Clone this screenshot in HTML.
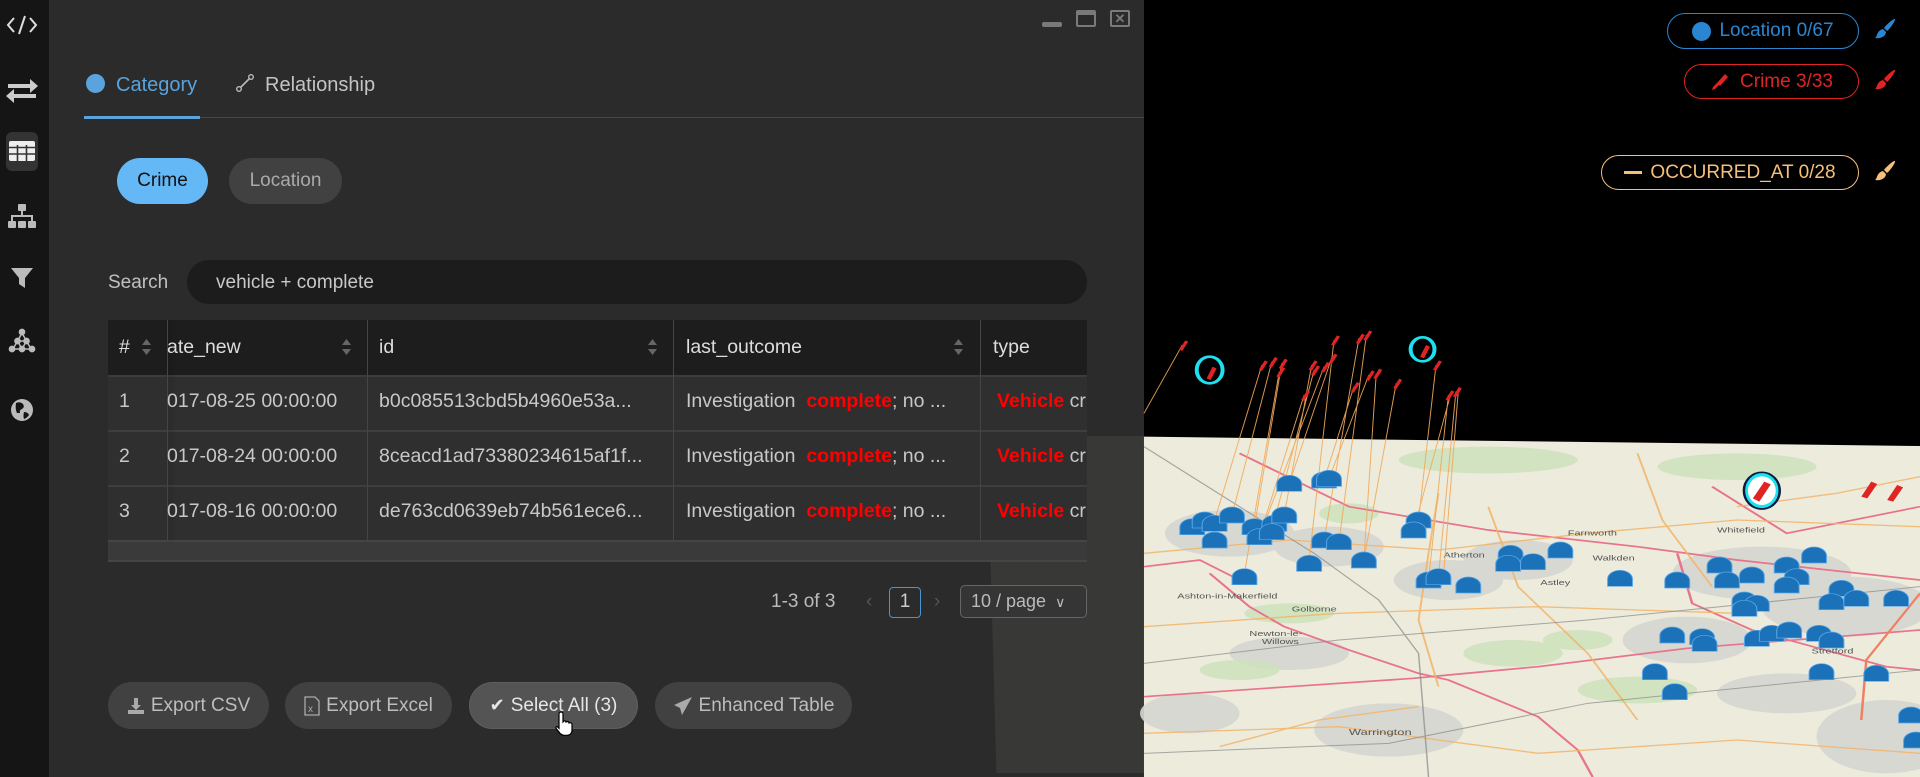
<!DOCTYPE html>
<html><head><meta charset="utf-8">
<style>
*{box-sizing:border-box;margin:0;padding:0}
html,body{width:1920px;height:777px;overflow:hidden}
body{background:#000;font-family:"Liberation Sans",sans-serif;position:relative}
svg{overflow:hidden}
.abs{position:absolute}
#side{left:0;top:0;width:49px;height:777px;background:#151515}
#panel{left:49px;top:0;width:1095px;height:777px;background:#2b2b2b}
.t{position:absolute;white-space:nowrap;line-height:1}
.pill{position:absolute;border-radius:30px;display:flex;align-items:center;justify-content:center;font-size:19px;white-space:nowrap}
.btn{position:absolute;top:682px;height:47px;border-radius:24px;background:#414141;color:#bdbdbd;font-size:19px;display:flex;align-items:center;justify-content:center;gap:6px;white-space:nowrap}
.cell{position:absolute;font-size:19.5px;color:#c8c8c8;white-space:nowrap;overflow:hidden;line-height:1}
.red{color:#f00;font-weight:bold}
</style></head><body>

<div id="side" class="abs">
 <svg width="49" height="777" style="position:absolute;left:0;top:0">
  <g fill="none" stroke="#ddd" stroke-width="2">
   <path d="M14 18 L8 25 L14 32 M30 18 L36 25 L30 32 M25 16 L19 34"/>
  </g>
  <g fill="#ccc">
   <path d="M8 84 h22 v-5 l8 7 l-8 7 v-5 h-22z"/>
   <path d="M36 94 h-22 v-5 l-8 7 l8 7 v-5 h22z"/>
  </g>
  <rect x="6" y="132" width="32" height="39" rx="6" fill="#333"/>
  <rect x="9" y="141" width="26" height="20" rx="2" fill="#eee"/>
  <g stroke="#333" stroke-width="1.6"><path d="M9 147.5h26M9 154h26M17.5 145v16M26.5 145v16"/></g>
  <g fill="#bbb">
   <rect x="18" y="204" width="8" height="7" rx="1"/><rect x="8" y="221" width="8" height="7" rx="1"/><rect x="18" y="221" width="8" height="7" rx="1"/><rect x="28" y="221" width="8" height="7" rx="1"/>
   <path d="M21 211h2v5h-2zM11 215h22v2h-22zM11 215h2v6h-2zM31 215h2v6h-2z"/>
   <path d="M11 268h22l-8 10v10l-6-4v-6z"/>
  </g>
  <g fill="#bbb" stroke="#bbb" stroke-width="1.5">
   <path d="M22 333 L13 349 L31 349 Z M17.5 341 L26.5 341 L22 349Z" fill="none"/>
   <circle cx="22" cy="332" r="2.6"/><circle cx="17.5" cy="341" r="2.6"/><circle cx="26.5" cy="341" r="2.6"/><circle cx="12" cy="349" r="2.6"/><circle cx="22" cy="349" r="2.6"/><circle cx="32" cy="349" r="2.6"/>
  </g>
  <circle cx="22" cy="410" r="11" fill="#bbb"/>
  <path d="M16 403 q4 -2 7 1 q2 3 -1 5 q-3 1 -2 4 l-3 0 q-2 -4 -1 -10z M24 412 q4 0 5 3 q-2 3 -5 4 q-1 -3 0 -7z" fill="#151515"/>
 </svg>
</div>

<div id="panel" class="abs"></div>
<!-- map behind panel (faded) -->
<div class="abs" style="left:987px;top:436px;width:157px;height:337px;background:#383836;clip-path:polygon(0 0,100% 0,100% 100%,6% 100%)"></div>

<!-- window controls -->
<div class="abs" style="left:1042px;top:22px;width:20px;height:5px;border-radius:2px;background:#7a7a7a"></div>
<div class="abs" style="left:1076px;top:10px;width:20px;height:17px;border:2px solid #7a7a7a;border-top-width:5px;border-radius:2px"></div>
<div class="abs" style="left:1110px;top:10px;width:20px;height:17px;border:2px solid #7a7a7a;border-radius:2px;color:#7a7a7a;font-size:13px;font-weight:bold;text-align:center;line-height:13px">✕</div>

<!-- tabs -->
<div class="abs" style="left:86px;top:74px;width:19px;height:19px;border-radius:50%;background:#5aa3dc"></div>
<div class="t" style="left:116px;top:75px;font-size:20px;color:#5aa3dc">Category</div>
<svg class="abs" style="left:235px;top:73px" width="20" height="20"><path d="M4 16 L16 4" stroke="#bbb" stroke-width="1.6"/><circle cx="4" cy="16" r="2.3" fill="#2b2b2b" stroke="#bbb" stroke-width="1.4"/><circle cx="16" cy="4" r="2.3" fill="#2b2b2b" stroke="#bbb" stroke-width="1.4"/></svg>
<div class="t" style="left:265px;top:75px;font-size:20px;color:#c4c4c4">Relationship</div>
<div class="abs" style="left:84px;top:117px;width:1060px;height:1px;background:#474747"></div>
<div class="abs" style="left:84px;top:116px;width:116px;height:3px;background:#5aa3dc"></div>

<!-- chips -->
<div class="pill" style="left:117px;top:158px;width:91px;height:46px;background:#64b8f5;color:#111;font-size:19px">Crime</div>
<div class="pill" style="left:229px;top:158px;width:113px;height:46px;background:#414141;color:#aaa;font-size:19px">Location</div>

<!-- search -->
<div class="t" style="left:108px;top:273px;font-size:19px;color:#c0c0c0">Search</div>
<div class="abs" style="left:187px;top:260px;width:900px;height:44px;border-radius:22px;background:#1c1c1c"></div>
<div class="t" style="left:216px;top:273px;font-size:19px;color:#c8c8c8">vehicle + complete</div>

<!-- table -->
<div class="abs" style="left:108px;top:320px;width:979px;height:242px;background:#2f2f2f;overflow:hidden">
 <div class="abs" style="left:0;top:0;width:979px;height:55px;background:#1d1d1d"></div>
 <div class="abs" style="left:0;top:55px;width:979px;height:2px;background:#3c3c3c"></div>
 <div class="abs" style="left:0;top:110px;width:979px;height:2px;background:#3e3e3e"></div>
 <div class="abs" style="left:0;top:165px;width:979px;height:2px;background:#3e3e3e"></div>
 <div class="abs" style="left:0;top:220px;width:979px;height:22px;background:#3a3a3a;border-top:2px solid #454545;border-bottom:2px solid #454545"></div>
 <div class="abs" style="left:59px;top:0;width:1px;height:220px;background:#454545;box-shadow:3px 0 4px rgba(0,0,0,.4)"></div>
 <div class="abs" style="left:259px;top:0;width:1px;height:220px;background:#454545"></div>
 <div class="abs" style="left:565px;top:0;width:1px;height:220px;background:#454545"></div>
 <div class="abs" style="left:872px;top:0;width:1px;height:220px;background:#454545"></div>
</div>
<svg class="abs" style="left:0;top:0" width="1100" height="400">
 <g fill="#666">
  <path d="M142 345h9l-4.5-6z M142 349h9l-4.5 6z"/>
  <path d="M342 345h9l-4.5-6z M342 349h9l-4.5 6z"/>
  <path d="M648 345h9l-4.5-6z M648 349h9l-4.5 6z"/>
  <path d="M954 345h9l-4.5-6z M954 349h9l-4.5 6z"/>
 </g>
</svg>
<div class="cell" style="left:119px;top:338px;color:#ddd">#</div>
<div class="cell" style="left:167px;top:338px;color:#ddd">ate_new</div>
<div class="cell" style="left:379px;top:338px;color:#ddd">id</div>
<div class="cell" style="left:686px;top:338px;color:#ddd">last_outcome</div>
<div class="cell" style="left:993px;top:338px;color:#ddd">type</div>

<div class="cell" style="left:119px;top:392px">1</div>
<div class="cell" style="left:167px;top:392px">017-08-25 00:00:00</div>
<div class="cell" style="left:379px;top:392px">b0c085513cbd5b4960e53a...</div>
<div class="cell" style="left:686px;top:392px">Investigation&nbsp; <span class="red">complete</span>; no ...</div>
<div class="cell" style="left:997px;top:392px;width:90px"><span class="red">Vehicle</span> crime</div>

<div class="cell" style="left:119px;top:447px">2</div>
<div class="cell" style="left:167px;top:447px">017-08-24 00:00:00</div>
<div class="cell" style="left:379px;top:447px">8ceacd1ad73380234615af1f...</div>
<div class="cell" style="left:686px;top:447px">Investigation&nbsp; <span class="red">complete</span>; no ...</div>
<div class="cell" style="left:997px;top:447px;width:90px"><span class="red">Vehicle</span> crime</div>

<div class="cell" style="left:119px;top:502px">3</div>
<div class="cell" style="left:167px;top:502px">017-08-16 00:00:00</div>
<div class="cell" style="left:379px;top:502px">de763cd0639eb74b561ece6...</div>
<div class="cell" style="left:686px;top:502px">Investigation&nbsp; <span class="red">complete</span>; no ...</div>
<div class="cell" style="left:997px;top:502px;width:90px"><span class="red">Vehicle</span> crime</div>

<!-- pagination -->
<div class="t" style="left:771px;top:592px;font-size:19px;color:#bbb">1-3 of 3</div>
<div class="t" style="left:866px;top:592px;font-size:19px;color:#555">‹</div>
<div class="abs" style="left:889px;top:587px;width:32px;height:31px;border:1.5px solid #4d93cf;border-radius:4px;color:#ccc;font-size:19px;text-align:center;line-height:28px">1</div>
<div class="t" style="left:934px;top:592px;font-size:19px;color:#555">›</div>
<div class="abs" style="left:960px;top:585px;width:127px;height:33px;border:1.5px solid #666;border-radius:5px;background:#353535;color:#bbb;font-size:18px;line-height:30px;padding-left:10px;white-space:nowrap">10 / page <span style="font-size:14px;margin-left:4px">∨</span></div>

<!-- buttons -->
<div class="btn" style="left:108px;width:161px"><svg width="18" height="18"><path d="M7 1h4v7h3l-5 5l-5-5h3z" fill="#aaa"/><rect x="1" y="13" width="16" height="4" fill="#aaa"/></svg>Export CSV</div>
<div class="btn" style="left:285px;width:167px"><svg width="16" height="20"><path d="M1 1h10l4 4v14h-14z" fill="none" stroke="#aaa" stroke-width="1.3"/><text x="4" y="16" font-size="10" fill="#aaa" font-family="Liberation Sans">x</text></svg>Export Excel</div>
<div class="btn" style="left:469px;width:169px;background:#545454;color:#e6e6e6;border:1px solid #5e5e5e"><span style="font-size:18px">✔</span>Select All (3)</div>
<div class="btn" style="left:655px;width:197px"><svg width="20" height="20"><path d="M19 1L1 9l6 3l2 7z" fill="#aaa"/></svg>Enhanced Table</div>
<svg class="abs" style="left:555px;top:710px" width="20" height="28"><path d="M6 2c1.5 0 2 1 2 2v8l1-1c1-.5 2 0 2 1l1-.5c1 0 2 .5 2 1.5l1-.3c1 0 2 .6 2 1.6v6c0 3-2 5-5 5h-3c-2 0-3-1-4-2l-4-5c-.6-1 .5-2 1.5-1.5l1.5 1.5V4c0-1 .5-2 2-2z" fill="#fff" stroke="#000" stroke-width="1.2"/></svg>

<!-- right panel pills -->
<div class="pill" style="left:1667px;top:13px;width:192px;height:36px;border:1.5px solid #2a86d1;color:#2a86d1;font-size:19px"><span style="display:inline-block;width:19px;height:19px;border-radius:50%;background:#2a86d1;margin-right:8px"></span>Location 0/67</div>
<div class="pill" style="left:1684px;top:64px;width:175px;height:35px;border:1.5px solid #e02424;color:#e02424;font-size:19px"><svg width="20" height="20" style="margin-right:10px"><path d="M15 2l3 3l-8 9l-3-3z M7 11l2 2l-4 4l-3 1l1-3z" fill="#e02424"/></svg>Crime 3/33</div>
<div class="pill" style="left:1601px;top:155px;width:258px;height:35px;border:1.5px solid #f7c07a;color:#f7c07a;font-size:19px"><span style="display:inline-block;width:18px;height:3px;background:#f7c07a;margin-right:8px"></span>OCCURRED_AT 0/28</div>
<svg class="abs" style="left:1873px;top:18px" width="24" height="24"><path d="M22 1c1 1-5 10-8 12l-3-3c2-3 10-10 11-9z M10 11l3 3c0 4-5 7-11 6c3-2 1-7 8-9z" fill="#2a86d1"/></svg>
<svg class="abs" style="left:1873px;top:69px" width="24" height="24"><path d="M22 1c1 1-5 10-8 12l-3-3c2-3 10-10 11-9z M10 11l3 3c0 4-5 7-11 6c3-2 1-7 8-9z" fill="#e02424"/></svg>
<svg class="abs" style="left:1873px;top:160px" width="24" height="24"><path d="M22 1c1 1-5 10-8 12l-3-3c2-3 10-10 11-9z M10 11l3 3c0 4-5 7-11 6c3-2 1-7 8-9z" fill="#f7c07a"/></svg>

<!-- map -->
<svg class="abs" style="left:1140px;top:320px" width="780" height="457" viewBox="0 0 1568 1371" preserveAspectRatio="none">
 <path d="M8 350 L1568 378 L1568 1371 L8 1371 Z" fill="#ecebdc"/>
 <g fill="#d6d6d2" opacity=".9">
  <ellipse cx="180" cy="640" rx="130" ry="70"/><ellipse cx="380" cy="680" rx="110" ry="60"/>
  <ellipse cx="620" cy="780" rx="110" ry="60"/><ellipse cx="1250" cy="760" rx="180" ry="80"/>
  <ellipse cx="1420" cy="860" rx="170" ry="90"/><ellipse cx="1100" cy="960" rx="130" ry="70"/>
  <ellipse cx="1500" cy="1250" rx="140" ry="110"/><ellipse cx="500" cy="1230" rx="150" ry="80"/>
  <ellipse cx="760" cy="720" rx="110" ry="60"/><ellipse cx="300" cy="1000" rx="120" ry="50"/>
  <ellipse cx="1300" cy="1120" rx="140" ry="60"/><ellipse cx="100" cy="1180" rx="100" ry="60"/>
 </g>
 <g fill="#cde2bb" opacity=".85">
  <ellipse cx="700" cy="420" rx="180" ry="40"/><ellipse cx="880" cy="960" rx="70" ry="30"/>
  <ellipse cx="300" cy="880" rx="90" ry="30"/><ellipse cx="1000" cy="1110" rx="120" ry="40"/>
  <ellipse cx="1200" cy="440" rx="160" ry="40"/><ellipse cx="420" cy="580" rx="60" ry="30"/>
  <ellipse cx="750" cy="1000" rx="100" ry="40"/><ellipse cx="200" cy="1050" rx="80" ry="30"/>
 </g>
 <g fill="none" stroke-width="5">
  <path d="M8 1130 L300 1100 L550 1075 L620 1065 L800 1040 L1100 985 L1400 950 L1568 930" stroke="#e8738a"/>
  <path d="M200 400 L420 560 L700 630 L1000 680 L1200 720 L1568 780" stroke="#e8738a"/>
  <path d="M1150 500 L1300 640 L1568 560" stroke="#e8738a"/>
  <path d="M140 760 L220 860 L290 920 L420 990 L560 1060 L620 1080 L800 1190 L880 1290 L910 1371" stroke="#e8738a"/>
  <path d="M1080 700 L1110 850 L1230 930 L1500 1040 L1568 1050" stroke="#e8738a"/>
  <path d="M8 740 L120 720 L200 780" stroke="#e8738a"/>
  <path d="M1568 820 L1460 1020 L1450 1200" stroke="#f08060"/>
 </g>
 <g fill="none" stroke="#f3b46a" stroke-width="4" opacity=".85">
  <path d="M8 700 L300 660 L600 690 L900 640 L1200 600 L1568 620"/>
  <path d="M8 920 L400 880 L800 860 L1200 880"/>
  <path d="M600 520 L580 700 L560 900 L600 1100"/>
  <path d="M1568 470 L1400 520 L1200 560"/>
  <path d="M8 1240 L400 1220 L800 1300 L1200 1260 L1568 1300"/>
  <path d="M160 1280 L360 1200 L560 1160"/>
  <path d="M700 560 L760 800 L900 1000 L1000 1200"/>
  <path d="M1000 400 L1050 600 L1150 800"/>
 </g>
 <g fill="none" stroke="#888" stroke-width="3" opacity=".7">
  <path d="M8 380 L200 560 L350 700 L480 840 L560 1000 L580 1371"/>
  <path d="M8 1030 L400 960 L900 900 L1568 800"/>
  <path d="M8 1300 L500 1270 L900 1150 L1568 1050"/>
 </g>
 <g font-family="Liberation Sans" font-size="22" fill="#555">
  <text x="75" y="835">Ashton-in-Makerfield</text><text x="305" y="875">Golborne</text>
  <text x="220" y="948">Newton-le-</text><text x="245" y="972">Willows</text>
  <text x="420" y="1245" font-size="26">Warrington</text><text x="610" y="712">Atherton</text>
  <text x="805" y="795">Astley</text><text x="910" y="722">Walkden</text><text x="1350" y="1000">Stretford</text>
  <text x="860" y="646">Farnworth</text><text x="1160" y="638">Whitefield</text>
 </g>
 <g stroke="#f3a95a" stroke-width="2" opacity=".9">
  <path d="M85 75 L8 280 M245 135 L150 600 M265 125 L185 585 M285 130 L230 620 M280 155 L210 760 M345 135 L290 585 M350 150 L265 630 M370 140 L240 650 M385 115 L300 490 M390 60 L340 720 M440 55 L370 660 M455 45 L400 665 M460 165 L380 475 M475 160 L450 720 M430 200 L370 480 M515 190 L450 720 M330 225 L240 650 M595 135 L560 600 M620 225 L580 780 M635 215 L600 770 M625 220 L550 630 M640 210 L610 770"/>
 </g>
 <g fill="#1c72b8" stroke="#5aa8e8" stroke-width="2">
  <path id="d" d="M-25 24 V2 A25 26 0 0 1 25 2 V24 Z" transform="translate(105 620)"/>
  <use href="#d" x="25" y="-20"/><use href="#d" x="45" y="-10"/><use href="#d" x="80" y="-35"/><use href="#d" x="45" y="40"/>
  <use href="#d" x="125" y="0"/><use href="#d" x="165" y="-10"/><use href="#d" x="185" y="-35"/><use href="#d" x="135" y="30"/>
  <use href="#d" x="160" y="15"/><use href="#d" x="105" y="150"/><use href="#d" x="195" y="-130"/><use href="#d" x="265" y="-140"/>
  <use href="#d" x="275" y="-145"/><use href="#d" x="235" y="110"/><use href="#d" x="265" y="40"/><use href="#d" x="295" y="45"/>
  <use href="#d" x="345" y="100"/><use href="#d" x="455" y="-20"/><use href="#d" x="445" y="10"/><use href="#d" x="475" y="160"/>
  <use href="#d" x="495" y="150"/><use href="#d" x="555" y="175"/><use href="#d" x="640" y="80"/><use href="#d" x="635" y="110"/>
  <use href="#d" x="685" y="105"/><use href="#d" x="740" y="70"/><use href="#d" x="860" y="155"/><use href="#d" x="975" y="160"/>
  <use href="#d" x="1060" y="115"/><use href="#d" x="1075" y="160"/><use href="#d" x="1125" y="145"/><use href="#d" x="1195" y="115"/>
  <use href="#d" x="1250" y="85"/><use href="#d" x="1215" y="150"/><use href="#d" x="1195" y="175"/><use href="#d" x="1305" y="185"/>
  <use href="#d" x="1285" y="225"/><use href="#d" x="1335" y="215"/><use href="#d" x="1110" y="220"/><use href="#d" x="1135" y="230"/>
  <use href="#d" x="1110" y="245"/><use href="#d" x="965" y="325"/><use href="#d" x="1025" y="330"/><use href="#d" x="1030" y="350"/>
  <use href="#d" x="1135" y="335"/><use href="#d" x="1165" y="320"/><use href="#d" x="1200" y="310"/><use href="#d" x="1260" y="320"/>
  <use href="#d" x="1285" y="340"/><use href="#d" x="930" y="435"/><use href="#d" x="970" y="495"/><use href="#d" x="1265" y="435"/>
  <use href="#d" x="1375" y="440"/><use href="#d" x="1445" y="565"/><use href="#d" x="1455" y="640"/><use href="#d" x="1415" y="215"/>
 </g>
 <g fill="#e02424">
  <path id="p" d="M-6 14 L6 -14 L12 -10 L0 18 Z" transform="translate(85 75)"/>
  <use href="#p" x="160" y="60"/><use href="#p" x="180" y="50"/><use href="#p" x="200" y="55"/><use href="#p" x="195" y="80"/>
  <use href="#p" x="260" y="60"/><use href="#p" x="265" y="75"/><use href="#p" x="285" y="65"/><use href="#p" x="300" y="40"/>
  <use href="#p" x="305" y="-15"/><use href="#p" x="355" y="-20"/><use href="#p" x="370" y="-30"/><use href="#p" x="375" y="90"/>
  <use href="#p" x="390" y="85"/><use href="#p" x="345" y="125"/><use href="#p" x="430" y="115"/><use href="#p" x="245" y="150"/>
  <use href="#p" x="510" y="60"/><use href="#p" x="535" y="150"/><use href="#p" x="550" y="140"/>
 </g>
 <g fill="#e02424">
  <path d="M1450 530 L1470 485 L1482 492 L1462 535Z"/><path d="M1502 540 L1522 495 L1534 502 L1514 545Z"/>
 </g>
 <g>
  <ellipse cx="140" cy="150" rx="26" ry="40" fill="none" stroke="#1ee0f0" stroke-width="8"/>
  <ellipse cx="568" cy="88" rx="24" ry="36" fill="none" stroke="#1ee0f0" stroke-width="8"/>
  <ellipse cx="1250" cy="512" rx="36" ry="55" fill="#1ee0f0" stroke="#0a1a40" stroke-width="5"/>
  <ellipse cx="1250" cy="512" rx="28" ry="43" fill="#fff"/>
  <path d="M1232 535 L1255 485 L1268 493 L1245 545 Z" fill="#e02424"/>
 </g>
 <g fill="#e02424"><path d="M134 175 L146 140 L154 146 L142 180Z"/><path d="M563 110 L575 75 L583 80 L571 115Z"/></g>
</svg>
</body></html>
